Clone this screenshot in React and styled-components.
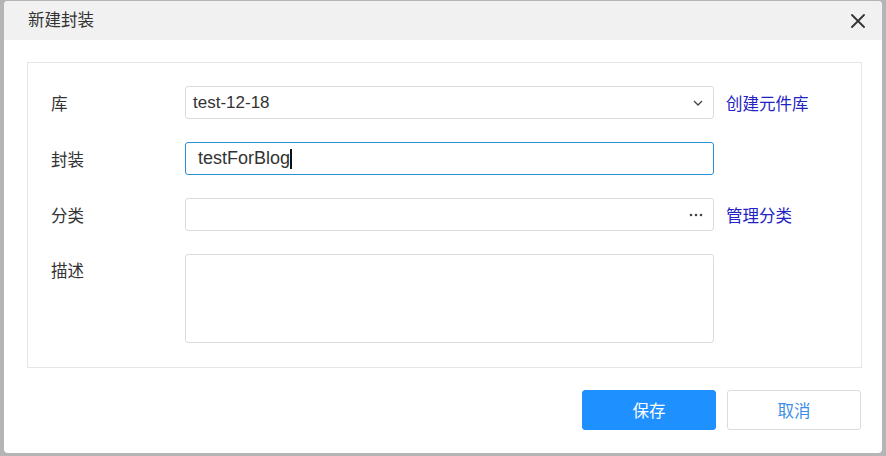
import React from "react";
import styled, { createGlobalStyle } from "styled-components";

const Global = createGlobalStyle`
  html, body { margin: 0; padding: 0; }
  body {
    background: #b5b5b5;
    width: 886px;
    height: 456px;
    overflow: hidden;
    font-family: "Liberation Sans", "Noto Sans CJK SC", sans-serif;
  }
`;

const Dialog = styled.div`
  margin: 1px 0 0 4px;
  width: 878px;
  height: 452px;
  background: #fff;
  border-radius: 4px;
  overflow: hidden;
  display: flex;
  flex-direction: column;
`;

const Header = styled.div`
  height: 39px;
  background: #f1f1f1;
  display: flex;
  align-items: center;
  justify-content: space-between;
  padding: 0 14px 0 24px;
  flex-shrink: 0;
`;

const Title = styled.div`
  font-family: "Noto Sans CJK SC", sans-serif;
  font-size: 16.5px;
  color: #333;
  margin-top: -3px;
`;

const Close = styled.button`
  border: 0;
  background: none;
  padding: 0;
  width: 20px;
  height: 20px;
  display: flex;
  align-items: center;
  justify-content: center;
  cursor: pointer;
`;

const Body = styled.div`
  padding: 22px 20px 0 23px;
`;

const Panel = styled.div`
  border: 1px solid #e6e6e6;
  padding: 23px 0 24px 0;
  display: flex;
  flex-direction: column;
  gap: 23px;
`;

const Row = styled.div`
  display: flex;
  align-items: ${(p) => (p.$top ? "flex-start" : "center")};
`;

const Label = styled.div`
  width: 134px;
  padding-left: 23px;
  font-family: "Noto Sans CJK SC", sans-serif;
  font-size: 16.5px;
  color: #333;
  margin-top: ${(p) => (p.$top ? "4px" : "0")};
`;

const Field = styled.div`
  width: 529px;
  height: ${(p) => p.$h || 33}px;
  box-sizing: border-box;
  border: 1px solid ${(p) => (p.$focus ? "#2b8fd6" : "#dcdcdc")};
  border-radius: 3px;
  display: flex;
  align-items: center;
  justify-content: space-between;
  padding: 0 ${(p) => (p.$focus ? 12 : 10)}px 0 ${(p) => (p.$focus ? 12 : 7)}px;
  background: #fff;
`;

const Value = styled.span`
  font-family: "Liberation Sans", sans-serif;
  font-size: ${(p) => p.$size || 17}px;
  color: #333;
  display: flex;
  align-items: center;
`;

const Caret = styled.span`
  display: inline-block;
  width: 2px;
  height: 20px;
  background: #111;
`;

const Link = styled.a`
  margin-left: 12px;
  font-family: "Noto Sans CJK SC", sans-serif;
  font-size: 16.5px;
  color: #2323c4;
  text-decoration: none;
  cursor: pointer;
`;

const Footer = styled.div`
  display: flex;
  justify-content: flex-end;
  gap: 11px;
  padding: 22px 21px 0 0;
`;

const Button = styled.button`
  width: 134px;
  height: 40px;
  box-sizing: border-box;
  border-radius: 3px;
  font-family: "Noto Sans CJK SC", sans-serif;
  font-size: 16.5px;
  cursor: pointer;
  background: ${(p) => (p.$primary ? "#1e90ff" : "#fff")};
  color: ${(p) => (p.$primary ? "#fff" : "#3d8ee6")};
  border: 1px solid ${(p) => (p.$primary ? "#1e90ff" : "#dcdcdc")};
`;

export default function App() {
  return (
    <>
      <Global />
      <Dialog>
        <Header>
          <Title>新建封装</Title>
          <Close aria-label="close">
            <svg width="14" height="14" viewBox="0 0 14 14">
              <path d="M1 1L13 13M13 1L1 13" stroke="#333" strokeWidth="1.8" strokeLinecap="round" />
            </svg>
          </Close>
        </Header>
        <Body>
          <Panel>
            <Row>
              <Label>库</Label>
              <Field>
                <Value>test-12-18</Value>
                <svg width="10" height="6" viewBox="0 0 10 6">
                  <path d="M1 1L5 5L9 1" stroke="#444" strokeWidth="1.3" fill="none" />
                </svg>
              </Field>
              <Link>创建元件库</Link>
            </Row>
            <Row>
              <Label>封装</Label>
              <Field $focus>
                <Value $size={18}>
                  testForBlog
                  <Caret />
                </Value>
              </Field>
            </Row>
            <Row>
              <Label>分类</Label>
              <Field>
                <span />
                <svg width="14" height="4" viewBox="0 0 14 4">
                  <circle cx="2" cy="2" r="1.3" fill="#444" />
                  <circle cx="7" cy="2" r="1.3" fill="#444" />
                  <circle cx="12" cy="2" r="1.3" fill="#444" />
                </svg>
              </Field>
              <Link>管理分类</Link>
            </Row>
            <Row $top>
              <Label $top>描述</Label>
              <Field $h={89} />
            </Row>
          </Panel>
        </Body>
        <Footer>
          <Button $primary>保存</Button>
          <Button>取消</Button>
        </Footer>
      </Dialog>
    </>
  );
}
